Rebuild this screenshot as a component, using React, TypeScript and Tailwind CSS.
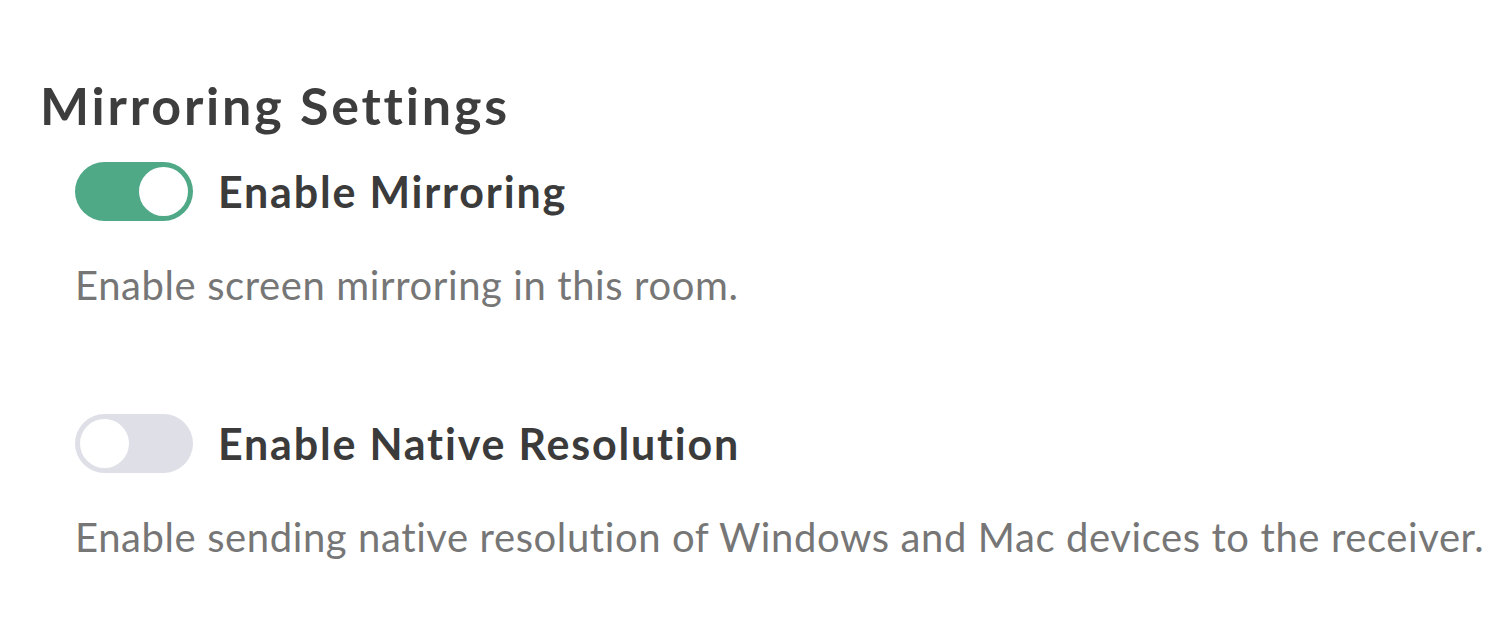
import { useState } from "react"

type ToggleProps = {
  on: boolean
  onChange: (v: boolean) => void
}

function Toggle({ on, onChange }: ToggleProps) {
  return (
    <button
      type="button"
      onClick={() => onChange(!on)}
      className={`flex h-[59px] w-[118px] shrink-0 items-center rounded-full p-[5px] ${
        on ? "justify-end bg-[#4fa886]" : "justify-start bg-[#dedfe7]"
      }`}
    >
      <span className="block h-[49px] w-[49px] rounded-full bg-white" />
    </button>
  )
}

function SettingRow({
  label,
  description,
  on,
  onChange,
}: {
  label: string
  description: string
  on: boolean
  onChange: (v: boolean) => void
}) {
  return (
    <div className="flex flex-col">
      <div className="flex items-center gap-[25px]">
        <Toggle on={on} onChange={onChange} />
        <span className="text-[43px] font-bold leading-[59px] tracking-[1.8px] text-[#3b3b3b]">{label}</span>
      </div>
      <p className="mt-[40px] text-[40px] leading-[48px] tracking-[0.6px] text-[#767676]">{description}</p>
    </div>
  )
}

export default function App() {
  const [mirroring, setMirroring] = useState(true)
  const [nativeRes, setNativeRes] = useState(false)

  return (
    <div
      className="h-[630px] w-[1500px] overflow-hidden bg-white pt-[75px] pl-[40px]"
      style={{ fontFamily: "Lato, 'Noto Sans', sans-serif" }}
    >
      <h1 className="text-[52px] font-bold leading-[60px] tracking-[2.8px] text-[#3d3d3d]">Mirroring Settings</h1>
      <div className="mt-[27px] flex flex-col gap-[105px] pl-[35px]">
        <SettingRow
          label="Enable Mirroring"
          description="Enable screen mirroring in this room."
          on={mirroring}
          onChange={setMirroring}
        />
        <SettingRow
          label="Enable Native Resolution"
          description="Enable sending native resolution of Windows and Mac devices to the receiver."
          on={nativeRes}
          onChange={setNativeRes}
        />
      </div>
    </div>
  )
}
